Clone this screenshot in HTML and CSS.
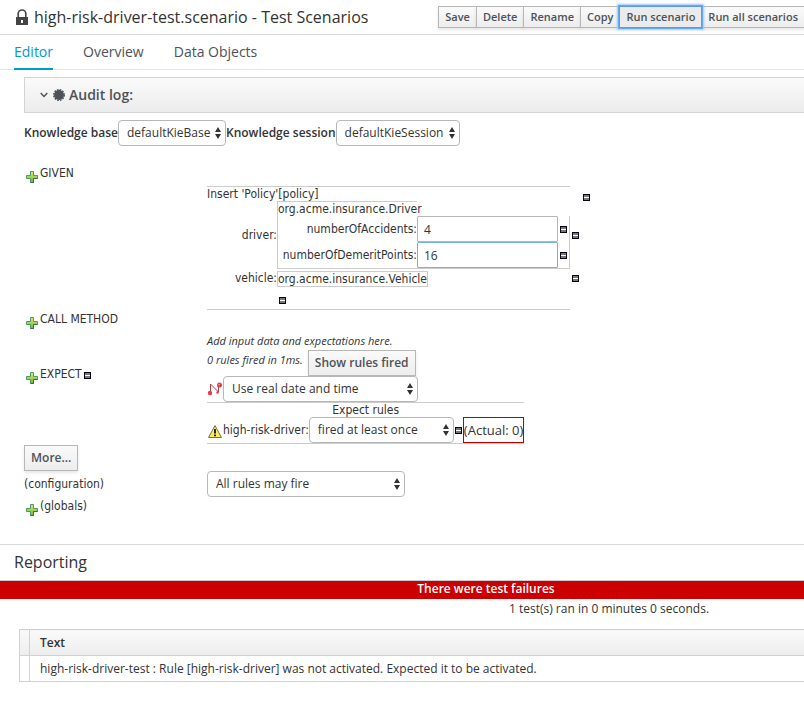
FILE: index.html
```html
<!DOCTYPE html>
<html lang="en">
<head>
<meta charset="utf-8">
<title>high-risk-driver-test.scenario - Test Scenarios</title>
<link rel="stylesheet" href="styles.css">
</head>
<body>
<svg class="defs" aria-hidden="true">
  <defs>
    <linearGradient id="green" x1="0" y1="0" x2="0" y2="1">
      <stop offset="0" stop-color="#e3e87a"/><stop offset="1" stop-color="#6fb536"/>
    </linearGradient>
    <symbol id="plus" viewBox="0 0 12 12">
      <path d="M4.5 .5h3v4h4v3h-4v4h-3v-4h-4v-3h4z" fill="url(#green)" stroke="#4a9a62"/>
      <path d="M4.5 11.5h3v-4h4" fill="none" stroke="#35724a"/>
    </symbol>
    <symbol id="minus" viewBox="0 0 7 7">
      <path d="M0 0h7v7H0z" fill="#05050f"/>
      <path d="M1 1h5v5H1z" fill="#777"/>
      <path d="M1 3h5v1H1z" fill="#fff"/>
    </symbol>
  </defs>
</svg>

<header class="titlebar">
  <svg class="lock" viewBox="0 0 12 16" aria-hidden="true">
    <path d="M2.2 8V4.6a3.8 3.6 0 0 1 7.6 0V8" fill="none" stroke="#484848" stroke-width="1.7"/>
    <path d="M0 8h12v8H0z" fill="#444"/>
    <path d="M5 11h2v3H5z" fill="#fff"/>
  </svg>
  <h1>high-risk-driver-test.scenario - Test Scenarios</h1>
  <div class="toolbar">
    <button class="btn">Save</button>
    <button class="btn">Delete</button>
    <button class="btn">Rename</button>
    <button class="btn">Copy</button>
    <button class="btn focused">Run scenario</button>
    <button class="btn">Run all scenarios</button>
  </div>
</header>

<nav class="tabs">
  <a class="active" href="#editor">Editor</a>
  <a href="#overview">Overview</a>
  <a href="#data">Data Objects</a>
</nav>

<main class="editor" id="editor">
  <button class="audit">
    <svg class="chevron" viewBox="0 0 8 6" aria-hidden="true"><path d="M.7 1l3.300 3.500L7.300 1" fill="none" stroke="#4d5258" stroke-width="1.400"/></svg>
    <svg class="seal" viewBox="-6 -6 12 12" aria-hidden="true">
      <circle r="5" fill="#4d5258"/>
      <circle r="5.300" fill="none" stroke="#4d5258" stroke-width="1.400" stroke-dasharray="1.665 1.110"/>
    </svg>
    <span>Audit log:</span>
  </button>

  <div class="bases">
    <label for="kbase">Knowledge base</label>
    <select id="kbase" class="select w-base"><option>defaultKieBase</option></select>
    <label for="ksession">Knowledge session</label>
    <select id="ksession" class="select w-session"><option>defaultKieSession</option></select>
  </div>

  <div class="scenario">
    <div class="side"><button class="icon" aria-label="Add fact"><svg class="plus"><use href="#plus"/></svg></button><span>GIVEN</span></div>

    <div class="given">
      <div class="facts">
        <div class="fact-title">Insert 'Policy'[policy]</div>
        <div class="name">driver:</div>
        <div class="nested">
          <div class="type">org.acme.insurance.Driver</div>
          <div class="fields">
            <label for="accidents">numberOfAccidents:</label>
            <input id="accidents" type="text" value="4">
            <button class="icon" aria-label="Remove numberOfAccidents"><svg class="minus"><use href="#minus"/></svg></button>
            <label for="points">numberOfDemeritPoints:</label>
            <input id="points" class="current" type="text" value="16">
            <button class="icon" aria-label="Remove numberOfDemeritPoints"><svg class="minus"><use href="#minus"/></svg></button>
          </div>
        </div>
        <button class="icon" aria-label="Remove driver"><svg class="minus"><use href="#minus"/></svg></button>
        <div class="name">vehicle:</div>
        <div class="vehicle">org.acme.insurance.Vehicle</div>
        <button class="icon" aria-label="Remove vehicle"><svg class="minus"><use href="#minus"/></svg></button>
        <button class="icon last" aria-label="Remove column"><svg class="minus"><use href="#minus"/></svg></button>
      </div>
      <button class="icon outer" aria-label="Remove policy"><svg class="minus"><use href="#minus"/></svg></button>
    </div>

    <div class="side"><button class="icon" aria-label="Add method call"><svg class="plus"><use href="#plus"/></svg></button><span>CALL METHOD</span></div>

    <em class="content hint">Add input data and expectations here.</em>

    <div class="side expect"><button class="icon" aria-label="Add expectation"><svg class="plus"><use href="#plus"/></svg></button><span>EXPECT</span><button class="icon" aria-label="Remove expectation"><svg class="minus"><use href="#minus"/></svg></button></div>
    <div class="content">
      <div class="line fired"><em>0 rules fired in 1ms.</em><button class="btn big">Show rules fired</button></div>
      <div class="line">
        <svg class="trace" viewBox="0 0 16 14" aria-hidden="true">
          <path d="M3.500 10V2l8 8V4" fill="none" stroke="#b03a48"/>
          <circle cx="3" cy="11" r="2.200" fill="#e8384a"/><circle cx="12.500" cy="3" r="2.500" fill="#e8384a"/>
          <circle cx="12" cy="2.500" r=".8" fill="#f8a0a8"/><circle cx="10.500" cy="10.500" r="1.200" fill="#e8384a"/>
        </svg>
        <select class="select w-date" aria-label="Date and time"><option>Use real date and time</option></select>
      </div>
    </div>

    <div class="content rules">
      <div class="rules-title">Expect rules</div>
      <div class="line">
        <svg class="warn" viewBox="0 0 14 13" aria-hidden="true">
          <path d="M7 .6L13.500 12.500H.5z" fill="#f9ea62" stroke="#77733c" stroke-linejoin="round"/>
          <path d="M7 4v4.500M7 9.500v1.700" stroke="#111" stroke-width="1.800"/>
        </svg>
        <label for="fired">high-risk-driver:</label>
        <select id="fired" class="select w-fired"><option>fired at least once</option></select>
        <button class="icon" aria-label="Remove rule"><svg class="minus"><use href="#minus"/></svg></button>
        <span class="actual">(Actual: 0)</span>
      </div>
    </div>

    <div class="more"><button class="btn big">More...</button></div>

    <label class="config" for="allow">(configuration)</label>
    <select id="allow" class="select w-allow"><option>All rules may fire</option></select>

    <div class="side"><button class="icon" aria-label="Add global"><svg class="plus"><use href="#plus"/></svg></button><span>(globals)</span></div>
  </div>
</main>

<section class="report">
  <h2>Reporting</h2>
  <div class="failure">There were test failures</div>
  <p class="summary">1 test(s) ran in 0 minutes 0 seconds.</p>
  <table>
    <thead><tr><th class="mark"></th><th>Text</th></tr></thead>
    <tbody><tr><td class="mark"></td><td>high-risk-driver-test : Rule [high-risk-driver] was not activated. Expected it to be activated.</td></tr></tbody>
  </table>
</section>
</body>
</html>
```
FILE: styles.css
```css
* { box-sizing: border-box; }
body {
  margin: 0;
  background: #fff;
  color: #333;
  font: 12px/20px "Open Sans", sans-serif;
  overflow-x: hidden;
}
button, input, select { font: inherit; color: inherit; margin: 0; }
.defs { position: absolute; width: 0; height: 0; }
svg { display: block; flex: none; }

.titlebar {
  display: flex;
  align-items: center;
  height: 35px;
  padding-left: 16px;
  border-bottom: 1px solid #d9d9d9;
}
.lock { width: 12px; height: 16px; }
h1 { flex: 1; margin: 0 0 0 6px; font-size: 16px; font-weight: 400; line-height: 34px; white-space: nowrap; }
.toolbar { display: flex; flex: none; margin-right: -1px; }
.btn {
  height: 22px;
  padding: 0 6px;
  border: 1px solid #b7b7b7;
  background: linear-gradient(#fafafa, #ededed);
  box-shadow: 0 2px 3px rgba(3, 3, 3, .1);
  color: #4d5258;
  font-family: "Open Sans", sans-serif;
  font-size: 11px;
  font-weight: 600;
  line-height: 20px;
  white-space: nowrap;
}
.toolbar .btn + .btn { margin-left: -1px; }
.btn.focused { position: relative; border-color: #5b9be6; background: #ebebeb; box-shadow: 0 0 0 1px #6aa8ef, 0 0 2px 2px #9cc6f6; }
.btn.big { height: 26px; font-size: 12px; line-height: 24px; }

.tabs { display: flex; gap: 30px; height: 35px; padding-left: 14px; border-bottom: 1px solid #e4e4e4; }
.tabs a { height: 35px; color: #4d5258; font-size: 14px; line-height: 34px; text-decoration: none; }
.tabs .active { border-bottom: 2px solid #0099d3; color: #0099d3; }

.editor { padding: 7px 0 25px 24px; }
.audit {
  display: flex;
  align-items: center;
  width: 100%;
  height: 36px;
  padding: 0 15px;
  border: solid #d3d3d3;
  border-width: 1px 0 1px 1px;
  background: linear-gradient(#fafafa, #ececec);
  color: #4d5258;
  font-size: 14px;
  font-weight: 600;
}
.chevron { width: 8px; height: 6px; }
.seal { width: 12px; height: 12px; margin: 0 4px 0 5px; }

.bases { display: flex; align-items: center; margin-top: 7px; font-weight: 600; }
.select {
  appearance: none;
  height: 26px;
  padding: 0 8px;
  border: 1px solid #b7b7b7;
  border-radius: 4px;
  background: #fff url("data:image/svg+xml,%3Csvg xmlns='http://www.w3.org/2000/svg' width='6' height='12'%3E%3Cpath d='M3 0l3 5H0zM3 12l3-5H0z' fill='%23333'/%3E%3C/svg%3E") no-repeat right 4px center;
  font-weight: 400;
  line-height: 24px;
}
.w-base { width: 108px; }
.w-session { width: 124px; }
.w-date { width: 195px; }
.w-fired { width: 145px; }
.w-allow { width: 198px; }

.icon { display: block; flex: none; padding: 0; border: 0; background: none; }
.plus { width: 12px; height: 12px; }
.minus { width: 7px; height: 7px; }

.scenario {
  display: grid;
  grid-template-columns: 183px 1fr;
  margin-top: 18px;
  font-family: "DejaVu Sans Condensed", "DejaVu Sans", sans-serif;
}
.side { display: flex; align-items: flex-start; grid-column: 1; height: 22px; line-height: 18px; }
.side .icon { margin: 7px 2px 0; }
.given, .content { grid-column: 2; }
.given { display: flex; align-items: flex-start; padding-top: 22px; line-height: 14px; }
.facts {
  display: grid;
  grid-template-columns: 70px 293px 10px;
  width: 363px;
  height: 124px;
  border: solid #ccc;
  border-width: 1px 0;
  align-items: center;
  align-content: start;
}
.fact-title { grid-column: 1 / -1; }
.facts > .icon { margin-left: 2px; }
.name { text-align: right; }
.type { width: 140px; border: solid #ccc; border-width: 1px 0 0 1px; }
.fields {
  display: grid;
  grid-template-columns: 139px 141px auto;
  align-items: center;
  border: solid #ccc;
  border-width: 0 1px 1px;
}
.fields label { text-align: right; }
.fields input { width: 100%; height: 26px; padding: 0 6px; border: 1px solid #b7b7b7; border-radius: 1px; font-family: "Open Sans", sans-serif; }
.fields .current { border-color: #7ab0dc; }
.fields .icon { margin-left: 2px; }
.vehicle { justify-self: start; margin-top: 2px; border: 1px solid #ccc; }
.facts > .last { grid-column: 2; margin-top: 10px; }
.outer { margin: 8px 0 0 13px; }

.line { display: flex; align-items: center; }
.scenario em, .scenario .select, .actual { font-family: "Open Sans", sans-serif; }
em { font-size: 11px; }
.hint { padding-top: 22px; line-height: 18px; }
.expect { height: 52px; padding-top: 15px; }
.fired { align-items: flex-start; gap: 5px; }
.trace { width: 16px; height: 14px; }
.rules { justify-self: start; border: solid #ccc; border-width: 1px 0; }
.rules-title { text-align: center; line-height: 14px; }
.warn { width: 14px; height: 13px; margin: 3px 1px 0; }
.rules .icon { margin: 0 1px; }
.actual { border: 1px solid #b00; font-size: 13px; line-height: 24px; }
.more { grid-column: 1 / -1; padding-top: 1px; }
.more .btn { display: block; }
.config { line-height: 26px; }

.report { border-top: 1px solid #d9d9d9; }
h2 { margin: 0; padding-left: 14px; border-bottom: 1px solid #ccc; font-size: 16px; font-weight: 400; line-height: 35px; }
.failure { height: 18px; padding-left: 168px; background: #c00; color: #fff; font-weight: 600; line-height: 16px; text-align: center; }
.summary { margin: 0; padding-left: 414px; text-align: center; }
table { width: calc(100% - 19px); margin: 10px 0 0 19px; border-collapse: collapse; }
th, td { height: 26px; padding: 0 10px; border: 1px solid #d1d1d1; border-right: 0; text-align: left; line-height: 25px; }
th { background: linear-gradient(#fafafa, #ededed); font-weight: 600; }
.mark { width: 10px; padding: 0; }
```
